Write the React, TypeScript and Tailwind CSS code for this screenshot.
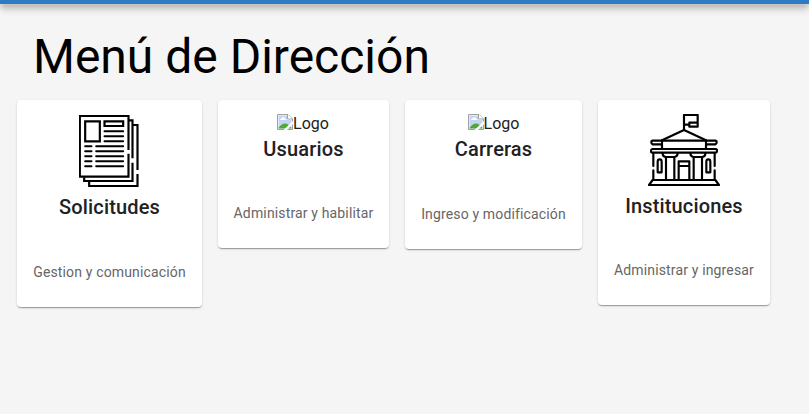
import type { ReactNode } from "react";

function DocumentIcon() {
  return (
    <svg className="mr-px mb-1 block h-[72px] w-[60px]" viewBox="28.5 21 180 216" fill="none" stroke="#000" strokeWidth="6.5">
      <path d="M59 222v12h145v-36M204 186V51h-14" />
      <path d="M44 208v11h145v-55M189 151V37h-13" />
      <path d="M177 137v69H31V24h146v102" />
      <path d="M47 40h44v60H47zM105 40h56v14h-56z" />
      <path
        strokeLinecap="round"
        strokeWidth="6"
        d="M105 70h56M105 85h56M105 100h56M47 115h19M80 115h81M47 130h19M80 130h81M47 145h19M80 145h81M47 160h19M80 160h81M47 175h19M80 175h81"
      />
    </svg>
  );
}

function InstitutionIcon() {
  return (
    <svg
      className="mb-1 block size-[72px]"
      viewBox="24 18 216 216"
      fill="none"
      stroke="#000"
      strokeWidth="6.5"
      strokeLinejoin="round"
      strokeLinecap="round"
    >
      <path d="M132 66V21h41v35h-25V44h25M132 50h16" />
      <path d="M66 97l66-31 66 31" />
      <path d="M66 97v26M198 97v26M66 98H38q-4 0-4 5t4 6h28M198 98h28q4 0 4 5t-4 6h-28M66 98h132" />
      <path d="M37 123h190q4 0 4 5t-4 6H37q-4 0-4-5t4-6z" />
      <path d="M40 137v37M40 187v27M224 137v37M224 187v27" />
      <path d="M68 137q0 9 10 10h25q9-1 10-10M151 137q1 9 10 10h25q10-1 10-10" />
      <path d="M78 149v65M103 149v65M161 149v65M186 149v65" />
      <path d="M53 193v-32q0-7 6-7t6 7v32zM199 193v-32q0-7 6-7t6 7v32z" />
      <path d="M116 214v-54h32v54M116 174h32" />
      <path d="M38 216h188l11 15H27z" />
    </svg>
  );
}

function MissingImage({ margin = "" }: { margin?: string }) {
  return (
    <div className={`flex h-[19px] text-[16px] leading-[19px] text-[#212121] ${margin}`}>
      <svg className="size-4 shrink-0" viewBox="0 0 16 16">
        <path d="M.5 .5h10.500l4.500 4.500v10.500H.5z" fill="#fff" stroke="#a0a0a0" />
        <path d="M1.500 1.500H10V6h4.500v8.500h-13z" fill="#c3d4f5" />
        <path d="M3 6q0-1.500 1.500-1.500Q5 3 6.200 3.200 7.500 3 8 4.500q1.300 0 1.300 1.500z" fill="#fff" />
        <path d="M1.500 14.500V14q3-4.500 6.500-4.500 3.500 0 6.500 4.500v.5z" fill="#4fa832" />
        <path d="M16 7v3l-6 6H6.500z" fill="#fff" />
        <path d="M10.500 .5V5h5" fill="#fff" stroke="#a0a0a0" />
      </svg>
      <span>Logo</span>
    </div>
  );
}

interface CardProps {
  title: string;
  text: string;
  size: string;
  image: ReactNode;
}

function MenuCard({ title, text, size, image }: CardProps) {
  return (
    <section
      className={`flex shrink-0 flex-col items-center rounded-[4px] bg-white shadow-[0_2px_1px_-1px_rgba(0,0,0,0.2),0_1px_1px_0_rgba(0,0,0,0.14),0_1px_3px_0_rgba(0,0,0,0.12)] ${size}`}
    >
      {image}
      <h2 className="text-[20px] leading-8 font-medium tracking-[0.15px] whitespace-nowrap text-[#212121]">{title}</h2>
      <p className="mt-auto mb-[25px] text-[14px] leading-5 tracking-[0.15px] whitespace-nowrap text-[#666]">{text}</p>
    </section>
  );
}

export default function App() {
  return (
    <div className="h-[414px] w-[809px] overflow-hidden bg-[#f5f5f5] font-[Roboto,sans-serif]">
      <header className="h-1 bg-[#2e7bc4] shadow-[0_3px_5px_-1px_rgba(0,0,0,0.4),0_5px_8px_0_rgba(0,0,0,0.2),0_1px_10px_0_rgba(0,0,0,0.12)]" />
      <h1 className="pt-[25px] pl-[33px] text-[48px] leading-[56px] text-black">Menú de Dirección</h1>
      <main className="flex items-start gap-4 pt-[15px] pl-[17px]">
        <MenuCard title="Solicitudes" text="Gestion y comunicación" size="h-[207px] w-[185px] pt-[15px]" image={<DocumentIcon />} />
        <MenuCard title="Usuarios" text="Administrar y habilitar" size="h-[148px] w-[171px] pt-[14px]" image={<MissingImage margin="mr-px" />} />
        <MenuCard title="Carreras" text="Ingreso y modificación" size="h-[149px] w-[177px] pt-[14px]" image={<MissingImage />} />
        <MenuCard title="Instituciones" text="Administrar y ingresar" size="h-[205px] w-[172px] pt-[14px]" image={<InstitutionIcon />} />
      </main>
    </div>
  );
}
